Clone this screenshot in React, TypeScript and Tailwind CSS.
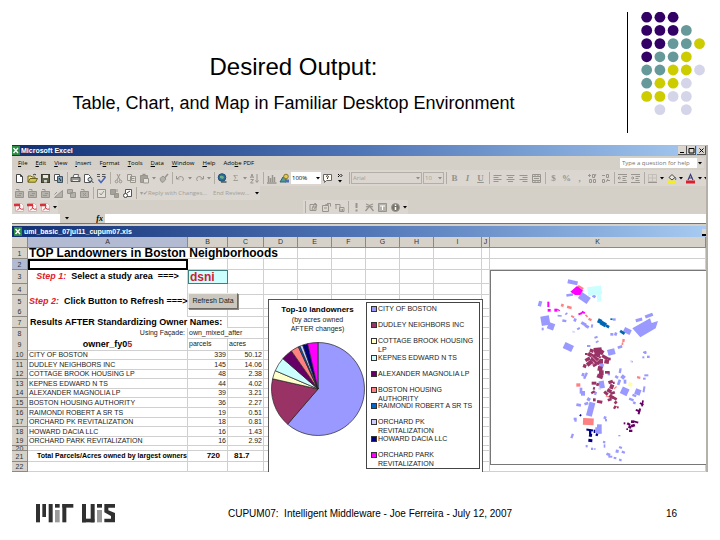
import React from "react";

type Kids = { children?: React.ReactNode };

const DOT_ROWS = ["PPP..", "PPPT.", "PPTTY", "PTTY.", "TTYYL", "TYYL.", "YYLL.", ".L.L."];
const DOT_COLORS: Record<string, string> = { P: "#330066", T: "#669999", Y: "#cccc00", L: "#d5d5ea" };

function DotPattern() {
  return (
    <svg width="66" height="104" viewBox="0 0 66 104" aria-hidden="true">
      {DOT_ROWS.flatMap((row, r) =>
        row.split("").map((c, i) =>
          c === "." ? null : (
            <circle key={`${r}-${i}`} cx={5.7 + i * 13.2} cy={5.2 + r * 13.2} r="5.4" fill={DOT_COLORS[c]} />
          ),
        ),
      )}
    </svg>
  );
}

function LabLogo() {
  return (
    <svg width="80" height="19" viewBox="48 43 240 57" role="img" aria-label="MIT UIS">
      <g fill="#303030">
        <rect x="48" y="43" width="12" height="55" />
        <rect x="67" y="43" width="11" height="39" />
        <rect x="86" y="43" width="12" height="55" />
        <rect x="105" y="43" width="14" height="11" />
        <rect x="127" y="43" width="12" height="55" />
        <rect x="127" y="43" width="33" height="11" />
        <rect x="186" y="43" width="12" height="55" />
        <rect x="186" y="87" width="37" height="11" />
        <rect x="212" y="43" width="12" height="55" />
        <rect x="231" y="43" width="15" height="11" />
        <path d="M253 43h32v11h-20v8l20 8v28h-32V87h20V79l-20-11z" />
      </g>
      <g fill="#9a9a9a">
        <rect x="105" y="61" width="14" height="37" />
        <rect x="231" y="61" width="15" height="37" />
      </g>
    </svg>
  );
}

/* ---------- toolbar pieces ---------- */

function Tool({ label, children }: Kids & { label: string }) {
  return (
    <button type="button" aria-label={label} className="flex h-3 w-[13px] shrink-0 items-center justify-center">
      <svg width="11" height="11" viewBox="0 0 11 11" fill="none" stroke="#98958e" strokeWidth="1">
        {children}
      </svg>
    </button>
  );
}

function Drop({ dark = false }: { dark?: boolean }) {
  return (
    <span className="flex w-[6px] shrink-0 justify-center">
      <svg width="4" height="3" viewBox="0 0 4 3" fill={dark ? "#000" : "#8f8c86"}>
        <path d="M0 0h4L2 2.6z" />
      </svg>
    </span>
  );
}

function Sep() {
  return (
    <span className="flex w-1 shrink-0 justify-center">
      <span className="h-3 w-px bg-[#b0aca4]" />
    </span>
  );
}

const TextMark = ({ label, className, children }: Kids & { label: string; className: string }) => (
  <button
    type="button"
    aria-label={label}
    className={`w-[13px] shrink-0 text-center font-['Liberation_Serif',serif] text-[9px] leading-3 font-bold text-[#96938c] ${className}`}
  >
    {children}
  </button>
);

const AlignIcon = ({ d, label }: { d: string; label: string }) => (
  <Tool label={label}>
    <path d={d} />
  </Tool>
);

function StandardBar() {
  return (
    <div className="flex h-4 items-center overflow-hidden bg-[#dbd7d0] pl-px">
      <Tool label="New">
        <path d="M2.5 1.5h4l2 2v6h-6z" fill="#fff" stroke="#444" />
        <path d="M6.5 1.5v2h2" stroke="#444" />
      </Tool>
      <Tool label="Open">
        <path d="M1 9V3h3l1 1h3v1.5" fill="#ffe98a" stroke="#6b6420" />
        <path d="M1 9.2 3 5.5h7.5L8.5 9.2z" fill="#d6c64a" stroke="#6b6420" />
        <path d="M6 2q2-1.500 3 0" stroke="#333" />
      </Tool>
      <Tool label="Save">
        <rect x="1.500" y="1.500" width="8" height="8" fill="#5d6048" stroke="#3b3d30" />
        <rect x="3" y="2" width="5" height="3" fill="#e8e8e0" stroke="none" />
        <rect x="4" y="7" width="3" height="2.500" fill="#cfcfc4" stroke="none" />
      </Tool>
      <Tool label="Search">
        <path d="M1.500 1.500h5v6h-5z" fill="#fff" stroke="#555" />
        <path d="M4.500 3.500h5v6h-5z" fill="#7fa2b8" stroke="#3e5160" />
        <path d="M6 5l2 3" stroke="#222" />
      </Tool>
      <Sep />
      <Tool label="Print">
        <path d="M3 4.500 4 1.500h4.500L8 4.500" fill="#fff" stroke="#666" />
        <path d="M1 4.500h9v4H1z" fill="#9a9a94" stroke="#555" />
        <path d="M3 7.500h5" stroke="#eee" />
      </Tool>
      <Tool label="Print Preview">
        <path d="M1.500 1.500h4l2 2v6h-6z" fill="#fff" stroke="#555" />
        <circle cx="7" cy="6.500" r="2" fill="#cfe0ea" stroke="#444" />
        <path d="M8.500 8 10.500 10" stroke="#333" />
      </Tool>
      <Tool label="Spelling">
        <path d="M1 1.500h3M1 3.500h3M6 1.500h3.500M6 3.500h3.500" stroke="#555" />
        <path d="m2.500 6.500 2.500 3L9.500 4" stroke="#4a63b8" strokeWidth="1.500" />
      </Tool>
      <Sep />
      <Tool label="Cut">
        <path d="M4 1l3 6M7 1 4 7" />
        <circle cx="3.500" cy="8.500" r="1.300" />
        <circle cx="7.500" cy="8.500" r="1.300" />
      </Tool>
      <Tool label="Copy">
        <path d="M1.500 1.500h4v6h-4zM4.500 3.500h5v6h-5z" fill="#e4e1da" />
        <path d="M6 5.500h2.500M6 7.500h2.500" />
      </Tool>
      <Tool label="Paste">
        <path d="M1.500 2.500h7v7h-7z" fill="#a5a29b" />
        <path d="M4.500 5.500h5v4.500h-5z" fill="#e4e1da" />
        <path d="M3.500 1.500h3" strokeWidth="1.500" />
      </Tool>
      <Drop />
      <Tool label="Format Painter">
        <path d="M10 1 6.500 5" strokeWidth="1.500" />
        <path d="M2 5.500 5 3l3 3-3 3.500-2-1z" fill="#b5b2ab" />
      </Tool>
      <Sep />
      <Tool label="Undo">
        <path d="M1.500 3v3h3M2 6q3-4 6-1.500 1 2-.5 3.500" />
      </Tool>
      <Drop />
      <Tool label="Redo">
        <path d="M9.500 3v3h-3M9 6Q6 2 3 4.500q-1 2 .5 3.500" />
      </Tool>
      <Drop />
      <Sep />
      <Tool label="Hyperlink">
        <circle cx="5" cy="4.500" r="3.800" fill="#2e6c9c" stroke="#1f4d75" />
        <path d="M3 3q2-1 4 1l-1 2-3-1z" fill="#6fae86" stroke="none" />
        <path d="M4 9h5.500" stroke="#555" strokeWidth="1.500" />
      </Tool>
      <TextMark label="AutoSum" className="font-normal">Σ</TextMark>
      <Drop />
      <Tool label="Sort Ascending">
        <path d="M1.500 5 3 1l1.500 4M2 4h2M1.500 6.500h3l-3 3.500h3M8 1v8M6.500 7.500 8 9.500l1.500-2" />
      </Tool>
      <Sep />
      <Tool label="Chart Wizard">
        <path d="M1 10h9.500M2.500 9V3M4.500 9V5M6.500 9V2M8.500 9V4" strokeWidth="1.500" />
      </Tool>
      <Tool label="Drawing">
        <path d="M1 9 4 4h3v5z" fill="#4f9a9a" stroke="#2f6470" />
        <circle cx="7" cy="3.500" r="2.300" fill="#e3c94e" stroke="#8a7a28" />
        <path d="M6 6.500h4v3H6z" fill="#4a6fb5" stroke="none" />
      </Tool>
      <span className="flex h-3 w-[30px] shrink-0 items-center bg-white pl-px text-[6px] leading-3">
        <span className="w-[23px]">100%</span>
        <Drop dark />
      </span>
      <Tool label="Help">
        <path d="M1.500 1.500h8v6h-5l-2 2v-2h-1z" fill="#fffef0" stroke="#666" />
        <path d="M4 3.500q2-1.500 2.500 0L5.500 5v1" stroke="#333" />
      </Tool>
      <Tool label="More">
        <path d="M3 1l1.500 1.500L3 4M5.500 1 7 2.500 5.500 4" stroke="#000" />
        <path d="M3 7h4L5 9.500z" fill="#000" stroke="none" />
      </Tool>
      <Sep />
      <span className="flex h-3 w-[71px] shrink-0 items-center justify-between border border-[#b3afa7] pl-px text-[6px] text-[#a19e97]">
        Arial <Drop />
      </span>
      <span className="ml-px flex h-3 w-[21px] shrink-0 items-center justify-between border border-[#b3afa7] pl-px text-[6px] text-[#a19e97]">
        10 <Drop />
      </span>
      <Sep />
      <TextMark label="Bold" className="">B</TextMark>
      <TextMark label="Italic" className="italic">I</TextMark>
      <TextMark label="Underline" className="underline">U</TextMark>
      <Sep />
      <AlignIcon label="Align Left" d="M1.500 2.500h8M1.500 4.500h5M1.500 6.500h8M1.500 8.500h5" />
      <AlignIcon label="Center" d="M1.500 2.500h8M3 4.500h5M1.500 6.500h8M3 8.500h5" />
      <AlignIcon label="Align Right" d="M1.500 2.500h8M4.500 4.500h5M1.500 6.500h8M4.500 8.500h5" />
      <AlignIcon label="Merge and Center" d="M1.500 1.500h8v8h-8zM1.500 3.500h8M1.500 7.500h8M4 1.500v2M7 1.500v2M4 7.500v2M7 7.500v2M3 5.500h5" />
      <Sep />
      <TextMark label="Currency Style" className="">$</TextMark>
      <TextMark label="Percent Style" className="">%</TextMark>
      <TextMark label="Comma Style" className="">,</TextMark>
      <AlignIcon label="Increase Decimal" d="M1 2.500h3M2.500 1v3M5.500 1.500h2v3h-2zM2.500 6.500h2v3h-2zM6.500 6.500h2v3h-2zM9 1 7 5" />
      <AlignIcon label="Decrease Decimal" d="M2.500 6.500h2v3h-2zM6.500 1.500h2v3h-2zM2 2.500h3M7 7.500h3M8 6 6 9" />
      <Sep />
      <AlignIcon label="Decrease Indent" d="M1 1.500h9M5.500 3.500h4.500M5.500 5.500h3M5.500 7.500h4M1 9.500h9M4 5H1M2.500 3.500 1 5l1.500 1.500" />
      <AlignIcon label="Increase Indent" d="M1 1.500h9M5.500 3.500h4.500M5.500 5.500h3M5.500 7.500h4M1 9.500h9M1 5h3M2.500 3.500 4 5 2.500 6.500" />
      <Sep />
      <Tool label="Borders">
        <path d="M1.500 1.500h8v7h-8zM5.500 1.500v7M1.500 5h8" stroke="#c3bfb8" />
        <path d="M1 9.500h9" />
      </Tool>
      <Drop dark />
      <Tool label="Fill Color">
        <path d="M3 4.500 6 1.500l3 3-3 2.500z" fill="#e8e8e0" stroke="#444" />
        <path d="M9 4q1.500 2 .5 3" stroke="#3b5fae" />
        <rect x="1" y="7.500" width="9" height="3" fill="#f5ee1c" stroke="none" />
      </Tool>
      <Drop dark />
      <Tool label="Font Color">
        <path d="M3 7 5.500 1.500 8 7M4 5h3" stroke="#35407c" strokeWidth="1.200" />
        <rect x="1" y="7.500" width="9" height="3" fill="#d8202c" stroke="none" />
      </Tool>
      <Drop dark />
      <Drop dark />
    </div>
  );
}

function ReviewBar() {
  return (
    <div className="flex h-[14px] items-center">
      <div className="flex h-full items-center bg-[#dbd7d0] pl-px">
        {["New Comment", "Previous Comment", "Next Comment"].map((n) => (
          <Tool key={n} label={n}>
            <path d="M1.500 3.500h8v6h-8z" fill="#b5b2ab" />
            <path d="M2 1.500h3v2M5 5.500h3M3 7.500h4" />
          </Tool>
        ))}
        <Tool label="Show Comment">
          <path d="M1.500 9.500h8v-7z" fill="#b5b2ab" />
          <path d="M1.500 6.500 4 4" />
        </Tool>
        <Tool label="Show All Comments">
          <path d="M1.500 1.500h5v4h-5zM4.500 4.500h5v5h-5z" fill="#b5b2ab" />
        </Tool>
        <Tool label="Delete Comment">
          <path d="M1.500 3.500h8v6h-8z" fill="#b5b2ab" />
          <path d="M2 1.500h3v2M4 5l3 3M7 5 4 8" />
        </Tool>
        <Sep />
        <Tool label="Create Task">
          <path d="M1.500 1.500h8v8h-8z" fill="#e4e1da" />
          <path d="m3.500 5 1.500 2 3-4" />
        </Tool>
        <Tool label="Update File">
          <path d="M1.500 1.500h5v5h-5zM5.500 5.500h4v4h-4z" fill="#a5a29b" />
          <path d="M8 1v3" />
        </Tool>
        <Tool label="Send to Mail Recipient">
          <path d="M3.500 1.500h6v7h-6z" fill="#fff" stroke="#555" />
          <circle cx="3.500" cy="7.500" r="2" fill="#fff" stroke="#444" />
          <path d="m5 5 3-2" stroke="#444" />
        </Tool>
        <Sep />
        <button type="button" className="ml-[2px] text-[6px] leading-3 text-[#a19e97]">▾✔Reply with Changes...</button>
        <button type="button" className="ml-[6px] text-[6px] leading-3 text-[#a19e97]">End Review...</button>
        <span className="ml-1 flex">
          <Drop dark />
        </span>
      </div>
    </div>
  );
}

function PdfBar() {
  return (
    <div className="flex h-[14px] items-center">
      <div className="flex h-full items-center bg-[#dbd7d0] pl-px">
        {["Convert to PDF", "Convert and Email", "Convert and Review"].map((n) => (
          <Tool key={n} label={n}>
            <path d="M1.500 1.500h6l2 2v6h-8z" fill="#fbf6f5" stroke="#d3b9b6" />
            <path d="M0 3h6" stroke="#d6303a" strokeWidth="2.500" />
            <path d="M3 8.500Q6 6.500 6 3.500M5.500 6q2 2 4 1" stroke="#d6303a" />
          </Tool>
        ))}
        <Drop dark />
      </div>
      <div className="ml-[245px] flex h-full items-center bg-[#dbd7d0]">
        <Sep />
        <Tool label="Design Mode">
          <path d="M2 2.500h6v6H2zM4 5h5M7 1l2 2-4 6-1-2z" />
        </Tool>
        <Tool label="Properties">
          <path d="M1.500 3.500h6v6h-6zM3 6h3M6 1.500h3.500v3M4 3l4-1" />
        </Tool>
        <Tool label="View Code">
          <path d="M1 2.500h5v4M5.500 5.500h4.500v4H5.500zM2 2v5M7 7v2M8.500 7v2" />
        </Tool>
        <Sep />
        <Tool label="Refresh">
          <path d="M5.500 1v5M5.500 7.500v2" strokeWidth="2" />
        </Tool>
        <Tool label="Cancel">
          <path d="M1.500 9 5.500 4l4 5M2 2l7 3M9 2 2 5" strokeWidth="1.300" />
        </Tool>
        <Tool label="Edit Range">
          <path d="M1.500 1.500h8v8h-8z" fill="#b5b2ab" />
          <path d="M3 4h5M5.500 4v4" stroke="#fff" />
        </Tool>
        <Tool label="About">
          <circle cx="5.500" cy="5.500" r="4" fill="#77746e" />
          <path d="M5.500 2.500v1.500M5.500 5v3" stroke="#fff" strokeWidth="1.500" />
        </Tool>
        <Drop dark />
      </div>
    </div>
  );
}

function ExcelMark() {
  return (
    <svg width="8" height="9" viewBox="0 0 8 9" className="shrink-0">
      <rect x="0" y="0" width="8" height="9" fill="#2b8a44" />
      <path d="m1.500 2 4.500 5M6 2 1.500 7" stroke="#fff" strokeWidth="1.400" />
    </svg>
  );
}

const MENUS = ["File", "Edit", "View", "Insert", "Format", "Tools", "Data", "Window", "Help"];
const MENU_KEYS: Record<string, number> = { Format: 1 };

function MenuBar() {
  return (
    <nav className="flex h-[14px] items-center gap-2 pr-[2px] pl-[6px] text-[6px] text-black">
      {MENUS.map((m) => {
        const k = MENU_KEYS[m] ?? 0;
        return (
          <button type="button" key={m}>
            {m.slice(0, k)}
            <span className="underline">{m[k]}</span>
            {m.slice(k + 1)}
          </button>
        );
      })}
      <button type="button">
        Ado<span className="underline">b</span>e PDF
      </button>
      <span className="ml-auto flex h-[10px] items-center bg-white">
        <input
          type="text"
          aria-label="Type a question for help"
          placeholder="Type a question for help"
          className="h-[10px] w-[77px] pl-[2px] text-[6px] leading-[10px] placeholder:text-[#77746e]"
        />
        <span className="flex h-[10px] w-[7px] items-center bg-[#dbd7d0]">
          <Drop dark />
        </span>
      </span>
    </nav>
  );
}

function WindowButton({ label, d }: { label: string; d: string }) {
  return (
    <button
      type="button"
      aria-label={label}
      className="flex h-[9px] w-[9px] items-center justify-center border-r border-b border-[#555] bg-[#dbd7d0]"
    >
      <svg width="7" height="7" viewBox="0 0 7 7" fill="none" stroke="#000">
        <path d={d} />
      </svg>
    </button>
  );
}

/* ---------- worksheet ---------- */

const ROW =
  "grid grid-cols-[16px_160px_40px_36px_34px_34px_34px_34px_34px_48px_8px_minmax(0,1fr)]";
const CELL = "min-w-0 border-r border-b border-[#d0d0d0] whitespace-nowrap";

function RowHead({ n, active = false }: { n: number; active?: boolean }) {
  return (
    <th
      scope="row"
      className={`flex items-center justify-center overflow-hidden border-r border-b border-[#8c8982] text-[7px] leading-[9px] font-normal text-[#333] ${
        active ? "bg-[#b3bbd2]" : "bg-[#d6d2ca]"
      }`}
    >
      {n}
    </th>
  );
}

function Blank({ count }: { count: number }) {
  return (
    <>
      {Array.from({ length: count }, (_, i) => (
        <td key={i} className={CELL} />
      ))}
    </>
  );
}

const OWNERS: [string, number, number][] = [
  ["CITY OF BOSTON", 339, 50.12],
  ["DUDLEY NEIGHBORS INC", 145, 14.06],
  ["COTTAGE BROOK HOUSING LP", 48, 2.38],
  ["KEPNES EDWARD N TS", 44, 4.02],
  ["ALEXANDER MAGNOLIA LP", 39, 3.21],
  ["BOSTON HOUSING AUTHORITY", 36, 2.27],
  ["RAIMONDI ROBERT A SR TS", 19, 0.51],
  ["ORCHARD PK REVITALIZATION", 18, 0.81],
  ["HOWARD DACIA LLC", 16, 1.43],
  ["ORCHARD PARK REVITALIZATION", 16, 2.92],
];
const SLICE_COLORS = [
  "#9999ff", "#993366", "#ffffcc", "#ccffff", "#660066", "#ff8080", "#0066cc", "#ccccff", "#000080", "#ff00ff",
];

function Sheet() {
  return (
    <table className="block w-full bg-white text-[#222]">
      <thead className="block">
        <tr className={`${ROW} h-[11px]`}>
          {["", "A", "B", "C", "D", "E", "F", "G", "H", "I", "J", "K"].map((c) => (
            <th
              key={c}
              scope="col"
              className={`border-r border-b border-[#8c8982] text-[7px] leading-[10px] font-normal text-[#333] ${
                c === "A" ? "bg-[#b3bbd2]" : "bg-[#d6d2ca]"
              }`}
            >
              {c}
            </th>
          ))}
        </tr>
      </thead>
      <tbody className="block">
        <tr className={`${ROW} h-[11px]`}>
          <RowHead n={1} />
          <td colSpan={4} className={`${CELL} col-span-4 pl-px text-[12px] leading-[10px] font-bold text-black`}>
            TOP Landowners in Boston Neighborhoods
          </td>
          <Blank count={7} />
        </tr>
        <tr className={`${ROW} h-[11px]`}>
          <RowHead n={2} active />
          <td className="border-2 border-black" />
          <Blank count={10} />
        </tr>
        <tr className={`${ROW} h-[14px]`}>
          <RowHead n={3} />
          <td className="flex items-center justify-center border-r border-[#d0d0d0] text-[9px] font-bold whitespace-pre text-black">
            <span className="text-[#e0202c] italic">Step 1:</span>
            {"  Select a study area  ===>"}
          </td>
          <td className="border border-[#3f7f7f] bg-[#ccffff] pl-px text-[12px] leading-3 font-bold text-[#d02030]">
            dsni
          </td>
          <Blank count={9} />
        </tr>
        <tr className={`${ROW} h-[11px]`}>
          <RowHead n={4} />
          <td className="border-r border-[#d0d0d0]" />
          <Blank count={10} />
        </tr>
        <tr className={`${ROW} h-3`}>
          <RowHead n={5} />
          <td className="flex items-center border-r border-[#d0d0d0] pl-px text-[9px] font-bold whitespace-pre text-black">
            <span className="text-[#e0202c] italic">Step 2:</span>
            {"  Click Button to Refresh ===>"}
          </td>
          <td className={`${CELL} relative`}>
            <button
              type="button"
              className="absolute top-[-2px] left-0 z-10 h-4 w-[50px] border border-t-[#eee] border-r-[#6c6962] border-b-[#6c6962] border-l-[#eee] bg-[#cbc7bf] text-[7px] text-[#222] shadow-[1px_1px_0_#8c8982]"
            >
              Refresh Data
            </button>
          </td>
          <Blank count={9} />
        </tr>
        <tr className={`${ROW} h-[10px]`}>
          <RowHead n={6} />
          <td className="border-r border-[#d0d0d0]" />
          <Blank count={10} />
        </tr>
        <tr className={`${ROW} h-[11px]`}>
          <RowHead n={7} />
          <td colSpan={2} className="col-span-2 border-r border-[#d0d0d0] pl-[2px] text-[9px] leading-[11px] font-bold whitespace-nowrap text-black">
            Results AFTER Standardizing Owner Names:
          </td>
          <Blank count={9} />
        </tr>
        <tr className={`${ROW} h-[10px]`}>
          <RowHead n={8} />
          <td className="border-r border-[#d0d0d0] pr-[2px] text-right text-[7px] leading-[10px]">Using Façade:</td>
          <td colSpan={2} className={`${CELL} col-span-2 pl-px text-[7px] leading-[10px]`}>own_mixed_after</td>
          <Blank count={8} />
        </tr>
        <tr className={`${ROW} h-3`}>
          <RowHead n={9} />
          <th scope="col" className="border-r border-b border-[#d0d0d0] text-[9px] leading-3 font-bold text-black">
            owner_fy0<span className="text-[#a03030]">5</span>
          </th>
          <th scope="col" className={`${CELL} pl-px text-left text-[7px] leading-3 font-normal`}>parcels</th>
          <th scope="col" className={`${CELL} pl-px text-left text-[7px] leading-3 font-normal`}>acres</th>
          <Blank count={8} />
        </tr>
      </tbody>
      <tbody className="flex h-24 flex-col text-[7px] leading-[9px]">
        {OWNERS.map(([name, parcels, acres], i) => (
          <tr key={name} className={`${ROW} min-h-0 flex-1`}>
            <RowHead n={10 + i} />
            <td className={`${CELL} pl-px`}>{name}</td>
            <td className={`${CELL} pr-px text-right`}>{parcels}</td>
            <td className={`${CELL} pr-px text-right`}>{acres.toFixed(2)}</td>
            <Blank count={8} />
          </tr>
        ))}
      </tbody>
      <tbody className="block">
        <tr className={`${ROW} h-[5px]`}>
          <RowHead n={20} />
          <Blank count={11} />
        </tr>
        <tr className={`${ROW} h-[11px] text-[8px] leading-[10px] font-bold text-black`}>
          <RowHead n={21} />
          <td className={`${CELL} flex justify-end overflow-hidden text-[7px]`}>
            <span>Total Parcels/Acres owned by largest owners</span>
          </td>
          <td className={`${CELL} pr-[7px] text-right`}>720</td>
          <td className={`${CELL} pl-[6px]`}>81.7</td>
          <Blank count={8} />
        </tr>
        <tr className={`${ROW} h-[10px]`}>
          <RowHead n={22} />
          <Blank count={11} />
        </tr>
      </tbody>
    </table>
  );
}

function Pie() {
  const total = OWNERS.reduce((s, o) => s + o[2], 0);
  let acc = 0;
  const at = (v: number) => {
    const a = (v / total) * Math.PI * 2;
    return `${(48 + 46.5 * Math.sin(a)).toFixed(2)} ${(48 - 46.5 * Math.cos(a)).toFixed(2)}`;
  };
  return (
    <svg width="96" height="96" viewBox="0 0 96 96" role="img" aria-label="Top-10 landowners by acres">
      {OWNERS.map(([name, , acres], i) => {
        const from = at(acc);
        acc += acres;
        return (
          <path
            key={name}
            d={`M48 48L${from}A46.5 46.5 0 ${acres / total > 0.5 ? 1 : 0} 1 ${at(acc)}Z`}
            fill={SLICE_COLORS[i]}
            stroke="#222"
            strokeWidth="0.7"
          />
        );
      })}
    </svg>
  );
}

function Chart() {
  return (
    <figure className="absolute top-[62px] bottom-0 left-[256px] flex w-[215px] border border-b-0 border-[#555] bg-white">
      <div className="flex w-[97px] flex-col items-center pt-[5px]">
        <figcaption className="text-center text-[7px] leading-[9px] whitespace-nowrap text-[#222]">
          <strong className="block text-[8px] leading-[10px] text-black">Top-10 landowners</strong>
          (by acres owned
          <br />
          AFTER changes)
        </figcaption>
        <div className="mt-2">
          <Pie />
        </div>
      </div>
      <ul className="mt-[2px] mr-[2px] mb-[3px] flex flex-1 flex-col border border-[#444] pt-px pb-[2px] pl-[5px]">
        {OWNERS.map(([name], i) => (
          <li key={name} className="flex min-h-0 flex-1 gap-px text-[7px] leading-[9px] text-[#222]">
            <span
              className="mt-[3px] h-1 w-1 shrink-0 outline outline-[#333]"
              style={{ backgroundColor: SLICE_COLORS[i] }}
            />
            <span className="w-[102px] pl-px">{name}</span>
          </li>
        ))}
      </ul>
    </figure>
  );
}

/* Parcel shapes as [x, y, width, height, rotation], grouped by owner colour. */
type Parcel = [number, number, number, number, number];
const PARCELS: [string, Parcel[]][] = [
  ["#9999ff", [
    [248, 148, 30, 12, 12], [244, 188, 20, 8, -8], [282, 190, 32, 22, 35], [160, 210, 10, 16, 15], [322, 192, 10, 8, 30],
    [168, 255, 26, 28, -10], [188, 276, 20, 20, 20], [218, 252, 12, 5, 5], [232, 266, 12, 7, 10], [240, 246, 8, 5, -40],
    [288, 274, 16, 9, 30], [300, 282, 12, 9, 30], [318, 280, 6, 10, 10], [276, 290, 9, 6, -30], [266, 262, 8, 10, 20],
    [236, 338, 28, 20, 25], [170, 290, 6, 8, 0], [384, 262, 8, 7, 0], [376, 306, 9, 8, 0], [388, 304, 8, 10, 20],
    [416, 292, 22, 16, 25], [452, 262, 20, 9, -15], [480, 249, 24, 10, -20], [398, 344, 14, 8, -20], [368, 354, 22, 18, -15],
    [328, 316, 10, 6, -20], [332, 330, 9, 5, -30], [306, 342, 10, 6, 0], [474, 362, 10, 5, 10], [472, 376, 6, 6, 0],
    [486, 374, 8, 7, 0], [478, 360, 6, 9, 0], [290, 426, 8, 10, 20], [298, 424, 7, 20, 25], [342, 398, 14, 12, 20],
    [402, 412, 7, 14, 10], [408, 432, 12, 12, 40], [398, 446, 8, 16, 20], [416, 446, 8, 12, 0], [390, 434, 10, 8, 30],
    [368, 424, 7, 9, 0], [342, 450, 16, 22, -10], [408, 470, 22, 22, 25], [450, 474, 17, 18, 20], [478, 430, 12, 6, 0],
    [474, 440, 8, 6, 0], [474, 466, 6, 18, 10], [442, 490, 12, 7, 20], [432, 502, 14, 7, 20], [444, 512, 8, 7, 20],
    [284, 470, 8, 18, 0], [288, 480, 12, 14, 0], [274, 518, 14, 8, 10], [298, 514, 12, 8, -20], [306, 500, 10, 10, 30],
    [328, 482, 7, 10, 20], [308, 514, 18, 42, 15], [266, 560, 9, 7, 0], [268, 566, 7, 6, 0], [356, 556, 8, 8, 20],
    [360, 564, 6, 7, 0], [336, 580, 14, 28, 0], [332, 588, 16, 20, -10], [258, 608, 7, 14, 20], [438, 390, 6, 4, 0],
    [302, 642, 6, 7, 0], [318, 650, 6, 7, 0], [326, 652, 6, 4, 0], [354, 630, 7, 7, 10], [356, 640, 5, 10, 0],
    [364, 666, 12, 8, 20], [370, 674, 12, 6, 0], [392, 656, 9, 9, 10], [402, 646, 9, 7, 20], [410, 660, 10, 7, 20],
    [386, 678, 8, 6, 10], [402, 684, 8, 6, 20], [400, 612, 6, 4, 0],
  ]],
  ["#d6d6f5", [[262, 300, 8, 5, 20], [340, 470, 8, 6, 20], [436, 388, 6, 5, 0]]],
  ["#ccffff", [[308, 166, 42, 26, -8], [336, 188, 12, 24, -5]]],
  ["#ff00ff", [[187, 212, 6, 16, 0], [188, 234, 9, 8, 0], [208, 233, 9, 9, 0], [216, 235, 9, 4, 30], [280, 245, 12, 6, -20], [290, 241, 10, 6, 25]]],
  ["#ff8080", [
    [278, 166, 18, 6, 30], [228, 219, 8, 8, 20], [246, 225, 14, 8, 15], [258, 254, 10, 6, 30], [300, 252, 9, 5, 45],
    [310, 262, 10, 7, 30], [412, 324, 7, 9, 10], [410, 334, 5, 8, 10], [274, 457, 12, 10, 0], [294, 562, 32, 20, 3],
    [456, 436, 10, 7, 10], [386, 468, 10, 4, -40], [362, 494, 10, 4, 20], [388, 526, 8, 4, -40],
  ]],
  ["#0066b3", [[338, 264, 12, 13, 25], [346, 272, 18, 13, 30], [362, 282, 11, 8, 30], [404, 300, 16, 8, 35], [376, 262, 7, 5, 10]]],
  ["#ffffa8", [[430, 454, 12, 12, 20]]],
  ["#993366", [
    [314, 354, 12, 10, 20], [326, 350, 24, 14, -5], [342, 356, 14, 14, 30], [308, 366, 18, 12, 30], [328, 362, 18, 16, 20],
    [318, 378, 30, 18, 35], [300, 380, 16, 10, -30], [350, 374, 20, 10, 30], [358, 386, 14, 12, 10], [304, 390, 20, 12, -40],
    [294, 400, 10, 10, 20], [322, 394, 14, 12, -30], [340, 384, 14, 14, 0], [368, 380, 9, 8, 0], [300, 366, 8, 6, 0],
    [338, 406, 14, 14, 10], [342, 418, 14, 14, 0], [336, 430, 18, 12, 20], [360, 420, 14, 8, 0], [344, 412, 8, 20, 0],
    [320, 452, 14, 9, 0], [334, 456, 8, 9, 20], [324, 468, 6, 8, 20], [318, 480, 12, 7, -30], [324, 502, 8, 9, 0],
    [336, 508, 16, 9, 10], [370, 448, 14, 10, -20], [374, 460, 12, 14, 20], [366, 474, 14, 11, 30], [356, 482, 14, 9, 40],
    [376, 482, 14, 8, -20], [372, 492, 14, 10, 30], [368, 502, 12, 8, -20], [382, 498, 14, 8, 30], [388, 510, 8, 9, 40],
    [386, 524, 7, 10, 30], [396, 526, 5, 6, 0], [342, 376, 6, 6, 0], [384, 452, 5, 7, 0],
  ]],
  ["#660066", [
    [470, 508, 5, 18, 10], [464, 516, 12, 6, 30], [460, 532, 6, 18, 15], [452, 536, 14, 6, 20], [438, 568, 9, 8, 0],
    [446, 570, 14, 6, 15], [426, 576, 10, 7, 30], [438, 580, 12, 8, -20], [430, 584, 9, 8, 30], [432, 596, 10, 7, 0],
    [416, 574, 5, 6, 0], [424, 592, 5, 5, 0],
  ]],
  ["#000080", [[304, 594, 20, 6, 8], [312, 600, 7, 10, 0], [312, 608, 9, 9, 10], [310, 624, 12, 9, 5], [332, 608, 7, 7, 20], [326, 596, 5, 10, 0], [284, 550, 5, 6, 30]]],
];

function ParcelMap() {
  return (
    <figure aria-label="Parcel map" className="absolute top-[33px] right-0 left-[478px] h-[195px] border border-r-0 border-[#777] bg-white">
      <svg width="214" height="194" viewBox="18 120 642 582" shapeRendering="geometricPrecision">
        <path d="M442 292 495 262 500 276 519 270 512 292 466 319z" fill="#9999ff" />
        {PARCELS.map(([color, list]) => (
          <g key={color} fill={color}>
            {list.map(([x, y, w, h, r], i) => (
              <rect key={i} x={x} y={y} width={w} height={h} transform={`rotate(${r} ${x + w / 2} ${y + h / 2})`} />
            ))}
          </g>
        ))}
        <path d="M256 182 276 165 294 178 286 192 270 192z" fill="#ff00ff" />
        <path d="M318 374 336 392 350 378M330 396 316 404" fill="none" stroke="#f5b5c5" strokeWidth="2" />
      </svg>
    </figure>
  );
}

function ExcelWindow() {
  return (
    <main className="mx-3 border-r-2 border-[#b5b1a9] bg-[#d4d0c8] font-['Open_Sans',sans-serif]">
      <div className="flex h-[11px] items-center bg-linear-to-r from-[#122f74] via-[#5075b6] via-50% to-[#a6caf0] text-[7px] leading-[11px] font-bold text-white">
        <ExcelMark />
        <span className="ml-px font-['Liberation_Sans',sans-serif]">Microsoft Excel</span>
        <span className="ml-auto flex">
          <WindowButton label="Minimize" d="M1 5.500h4" />
          <WindowButton label="Restore" d="M1 1.500h5v4.500H1z" />
          <span className="w-px" />
          <WindowButton label="Close" d="m1.500 1.500 4 4M5.500 1.500l-4 4" />
        </span>
      </div>
      <MenuBar />
      <StandardBar />
      <ReviewBar />
      <PdfBar />
      <div className="flex h-[10px] border-b border-[#77746e] font-['Liberation_Sans',sans-serif]">
        <input type="text" aria-label="Name Box" className="w-12 bg-white" />
        <span className="flex w-[14px] items-center justify-center">
          <Drop dark />
        </span>
        <label htmlFor="formula" className="w-[31px] pr-[2px] text-right font-['Liberation_Serif',serif] text-[8px] leading-[9px] font-bold italic">
          fx
        </label>
        <input id="formula" type="text" className="min-w-0 flex-1 bg-white" />
      </div>
      <div className="mt-[2px] flex h-[11px] items-center overflow-hidden bg-linear-to-r from-[#122f74] via-[#5075b6] via-50% to-[#a6caf0] pl-[2px] font-['Liberation_Sans',sans-serif] text-[7px] leading-[11px] font-bold text-white">
        <ExcelMark />
        <span className="ml-[2px]">umi_basic_07jul11_cupum07.xls</span>
        <button type="button" aria-label="Minimize workbook" className="mt-[2px] ml-auto h-[7px] w-1 border-b-2 border-black bg-[#dbd7d0]" />
      </div>
      <div className="relative font-['Liberation_Sans',sans-serif]">
        <Sheet />
        <Chart />
        <ParcelMap />
      </div>
    </main>
  );
}

export default function App() {
  return (
    <div className="flex min-h-screen flex-col bg-white font-['Liberation_Sans',Arial,sans-serif] text-black">
      <header className="flex h-[145px] pt-3">
        <div className="flex-1 pt-10 pr-10 text-center">
          <h1 className="text-2xl leading-[30px]">Desired Output:</h1>
          <h2 className="mt-[6px] text-lg leading-[30px]">Table, Chart, and Map in Familiar Desktop Environment</h2>
        </div>
        <div className="h-[121px] w-[93px] border-l border-black pl-[13px]">
          <DotPattern />
        </div>
      </header>
      <ExcelWindow />
      <footer className="mt-[32px] flex items-center pr-[43px] pl-9 text-[10px] leading-[19px]">
        <div className="w-48">
          <LabLogo />
        </div>
        <p className="whitespace-pre">{"CUPUM07:  Intelligent Middleware - Joe Ferreira - July 12, 2007"}</p>
        <span className="ml-auto">16</span>
      </footer>
    </div>
  );
}
